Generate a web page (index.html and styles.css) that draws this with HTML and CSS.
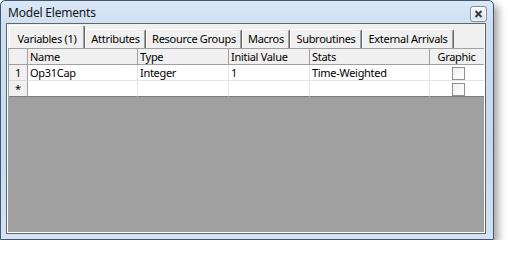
FILE: index.html
```html
<!DOCTYPE html>
<html>
<head>
<meta charset="utf-8">
<link rel="stylesheet" href="styles.css">
</head>
<body>
<div class="window">
  <div class="titlebar">
    <span class="title">Model Elements</span>
    <span class="close"><svg width="9" height="8" viewBox="0 0 9 8"><path d="M1.5 1 L7.5 7 M7.5 1 L1.5 7" stroke="#3a3a3a" stroke-width="2" fill="none"/></svg></span>
  </div>
  <div class="client">
    <div class="inner">
      <div class="tabs">
        <div class="tab active">Variables (1)</div>
        <div class="tab">Attributes</div>
        <div class="tab">Resource Groups</div>
        <div class="tab">Macros</div>
        <div class="tab">Subroutines</div>
        <div class="tab">External Arrivals</div>
      </div>
      <div class="grid">
        <table class="sheet">
          <thead>
            <tr>
              <th class="rh"></th>
              <th class="c-name">Name</th>
              <th class="c-type">Type</th>
              <th class="c-init">Initial Value</th>
              <th class="c-stats">Stats</th>
              <th class="c-graph center">Graphic</th>
            </tr>
          </thead>
          <tbody>
            <tr>
              <td class="rh">1</td>
              <td>Op31Cap</td>
              <td>Integer</td>
              <td>1</td>
              <td>Time-Weighted</td>
              <td class="center"><span class="check"></span></td>
            </tr>
            <tr class="last">
              <td class="rh">*</td>
              <td></td>
              <td></td>
              <td></td>
              <td></td>
              <td class="center"><span class="check"></span></td>
            </tr>
          </tbody>
        </table>
      </div>
    </div>
  </div>
</div>
</body>
</html>
```

FILE: styles.css
```css
html, body {
  margin: 0;
  padding: 0;
  background: #ffffff;
}

body {
  font-family: "Noto Sans", "Open Sans", "DejaVu Sans", sans-serif;
  font-size: 11px;
  letter-spacing: -0.3px;
  color: #000;
}

.window {
  width: 494px;
  height: 240px;
  box-sizing: border-box;
  border: 1px solid #44576c;
  border-radius: 5px 5px 0 0;
  background: linear-gradient(180deg, #d9e7f6 0%, #cfe0f3 10%, #c6d9ef 60%, #d3e3f5 100%);
  box-shadow: 4px 5px 9px rgba(0, 0, 0, 0.38);
  display: flex;
  flex-direction: column;
}

.titlebar {
  height: 22px;
  flex: none;
  display: flex;
  align-items: center;
  justify-content: space-between;
  padding: 0 6px 0 7px;
}

.title {
  font-size: 12px;
  color: #151515;
  line-height: 16px;
  margin-top: 2px;
  letter-spacing: -0.2px;
}

.close {
  width: 15px;
  height: 14px;
  margin-top: 3px;
  border: 1px solid #7f8c9b;
  border-radius: 3px;
  background: linear-gradient(180deg, #f7f9fc 0%, #e7edf4 50%, #d9e2ec 100%);
  box-shadow: inset 0 0 0 1px rgba(255,255,255,0.7);
  display: flex;
  align-items: center;
  justify-content: center;
}

.client {
  flex: 1;
  margin: 0 7px 5px 5px;
  border: 1px solid #646464;
  display: flex;
  flex-direction: column;
  min-height: 0;
}

.inner {
  flex: 1;
  border: 1px solid #ffffff;
  border-top: 0;
  background: #f0f0f0;
  display: flex;
  flex-direction: column;
  min-height: 0;
}

.tabs {
  height: 24px;
  flex: none;
  display: flex;
  align-items: flex-end;
  padding-left: 1px;
}

.tab {
  height: 19px;
  box-sizing: border-box;
  border-top: 1px solid #ffffff;
  border-left: 1px solid #ffffff;
  border-right: 1px solid #696969;
  box-shadow: inset -1px 0 0 #a0a0a0;
  border-radius: 2px 2px 0 0;
  display: flex;
  align-items: flex-end;
  justify-content: center;
  padding-bottom: 2px;
  line-height: 15px;
  white-space: nowrap;
}

.tab.active {
  height: 23px;
  padding-bottom: 2px;
}

.tab:nth-child(1) { width: 76px; }
.tab:nth-child(2) { width: 61px; }
.tab:nth-child(3) { width: 96px; }
.tab:nth-child(4) { width: 48px; }
.tab:nth-child(5) { width: 72px; }
.tab:nth-child(6) { width: 92px; }

.grid {
  flex: 1;
  background: #a0a0a0;
  min-height: 0;
}

.sheet {
  border-collapse: separate;
  border-spacing: 0;
  table-layout: fixed;
  width: 476px;
  border-top: 1px solid #a0a0a0;
  border-left: 1px solid #a0a0a0;
}

.sheet th,
.sheet td {
  height: 15px;
  padding: 0 0 0 2px;
  line-height: 15px;
  text-align: left;
  font-weight: normal;
  white-space: nowrap;
  overflow: hidden;
  box-sizing: content-box;
}

.sheet th {
  background: #f0f0f0;
  border-right: 1px solid #a0a0a0;
  border-bottom: 1px solid #a0a0a0;
}

.sheet td {
  background: #ffffff;
  border-right: 1px solid #e4e4e4;
  border-bottom: 1px solid #e4e4e4;
}

.sheet td.rh {
  background: #f0f0f0;
  border-right: 1px solid #a0a0a0;
  border-bottom: 1px solid #d8d8d8;
  text-align: center;
  padding: 0;
}

.sheet th.rh { width: 18px; padding: 0; }
.sheet .c-name { width: 107px; }
.sheet .c-type { width: 88px; }
.sheet .c-init { width: 78px; }
.sheet .c-stats { width: 117px; }
.sheet .c-graph { width: 51px; }

.sheet .center {
  text-align: center;
  padding: 0 1px 0 0;
}

.sheet th.c-graph { border-right: 0; padding-right: 1px; width: 53px; }
.sheet tr td:last-child { border-right: 0; }

.sheet tr.last td {
  border-bottom: 1px solid #7c7c7c;
}

.check {
  display: inline-block;
  width: 11px;
  height: 11px;
  border: 1px solid #8e8f8f;
  background: linear-gradient(135deg, #f0f0f0 0%, #ffffff 100%);
  vertical-align: middle;
  margin-top: -2px;
  margin-left: 3px;
}
```
